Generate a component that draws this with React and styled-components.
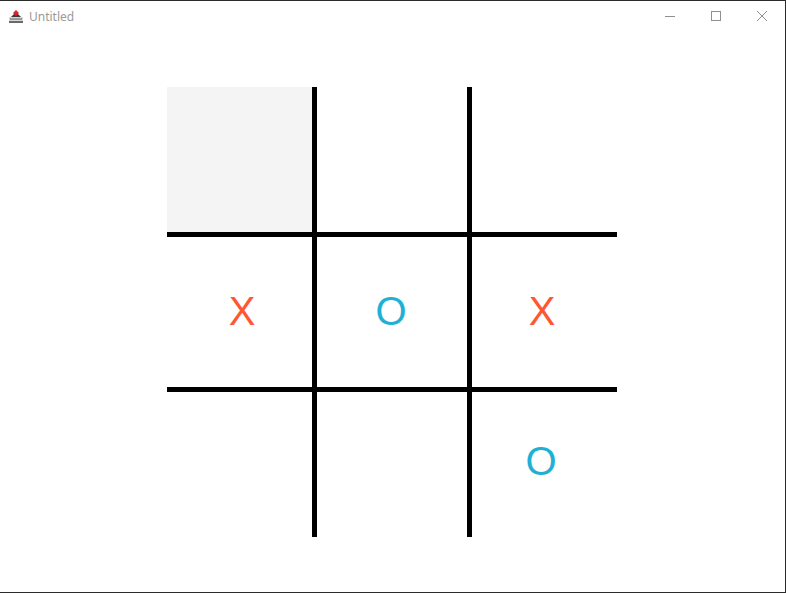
import React from 'react'
import styled, { createGlobalStyle } from 'styled-components'

const Global = createGlobalStyle`
    html, body {
        margin: 0;
        padding: 0;
        background: #ffffff;
    }
`

const Window = styled.div`
    width: 786px;
    height: 593px;
    box-sizing: border-box;
    border-top: 1px solid #2b2b2b;
    border-right: 1px solid #2b2b2b;
    border-bottom: 1px solid #2b2b2b;
    background: #ffffff;
    display: flex;
    flex-direction: column;
    font-family: "Noto Sans", "Liberation Sans", sans-serif;
`

const TitleBar = styled.div`
    height: 30px;
    display: flex;
    align-items: center;
    padding-left: 8px;
    flex-shrink: 0;
`

const AppIcon = styled.svg`
    width: 16px;
    height: 16px;
    margin-top: -1px;
`

const Title = styled.span`
    margin-left: 5px;
    font-size: 12px;
    color: #9a9a9a;
    font-family: "Noto Sans", "Liberation Sans", sans-serif;
`

const Controls = styled.div`
    margin-left: auto;
    display: flex;
    height: 100%;
`

const ControlButton = styled.div`
    width: 46px;
    height: 30px;
    display: flex;
    align-items: center;
    justify-content: center;

    & svg {
        width: 10px;
        height: 10px;
        stroke: #8f8f8f;
        stroke-width: 1;
        fill: none;
        shape-rendering: crispEdges;
    }
`

const Content = styled.div`
    flex: 1;
    padding: 56px 0 0 167px;
`

const Board = styled.div`
    display: grid;
    grid-template-columns: repeat(3, 150px);
    grid-template-rows: repeat(3, 150px);
    width: 450px;
`

const lineShadows = ({ row, col }) => {
    let shadows = []
    if (col === 0) shadows.push('inset -5px 0 0 #000')
    if (col === 2) shadows.push('inset 5px 0 0 #000')
    if (row === 0) shadows.push('inset 0 -5px 0 #000')
    if (row === 2) shadows.push('inset 0 5px 0 #000')
    return shadows.length ? shadows.join(', ') : 'none'
}

const Cell = styled.div`
    display: flex;
    align-items: center;
    justify-content: center;
    background: ${(p) => (p.$hover ? '#f4f4f4' : '#ffffff')};
    box-shadow: ${(p) => lineShadows(p)};
`

const Mark = styled.span`
    font-family: "Liberation Sans", Arial, sans-serif;
    font-size: 40px;
    line-height: 1;
    color: ${(p) => (p.$player === 'X' ? '#ff5733' : '#21b0d5')};
    transform: translate(${(p) => (p.$player === 'O' ? '-1px' : '0')}, -1px);
`

const board = [
    ['', '', ''],
    ['X', 'O', 'X'],
    ['', '', 'O'],
]

export default function App() {
    return (
        <Window>
            <Global />
            <TitleBar>
                <AppIcon viewBox="0 0 16 16">
                    <rect x="1" y="9" width="14" height="5" fill="#d8d8d8" />
                    <rect x="1" y="13" width="14" height="2" fill="#6b6b6b" />
                    <path d="M3 9 L8 4 L13 9 Z" fill="#3a3a3a" />
                    <path d="M8 2 L11 5 L8 8 L5 5 Z" fill="#e0202a" />
                    <rect x="2" y="10" width="12" height="2" fill="#9a9a9a" />
                </AppIcon>
                <Title>Untitled</Title>
                <Controls>
                    <ControlButton>
                        <svg viewBox="0 0 10 10">
                            <line x1="0" y1="5.5" x2="10" y2="5.5" />
                        </svg>
                    </ControlButton>
                    <ControlButton>
                        <svg viewBox="0 0 10 10">
                            <rect x="0.5" y="0.5" width="9" height="9" />
                        </svg>
                    </ControlButton>
                    <ControlButton>
                        <svg viewBox="0 0 10 10" style={{ shapeRendering: 'auto' }}>
                            <line x1="0" y1="0" x2="10" y2="10" />
                            <line x1="10" y1="0" x2="0" y2="10" />
                        </svg>
                    </ControlButton>
                </Controls>
            </TitleBar>
            <Content>
                <Board>
                    {board.map((cells, row) =>
                        cells.map((value, col) => (
                            <Cell key={row + '-' + col} row={row} col={col} $hover={row === 0 && col === 0}>
                                {value && <Mark $player={value}>{value}</Mark>}
                            </Cell>
                        ))
                    )}
                </Board>
            </Content>
        </Window>
    )
}
